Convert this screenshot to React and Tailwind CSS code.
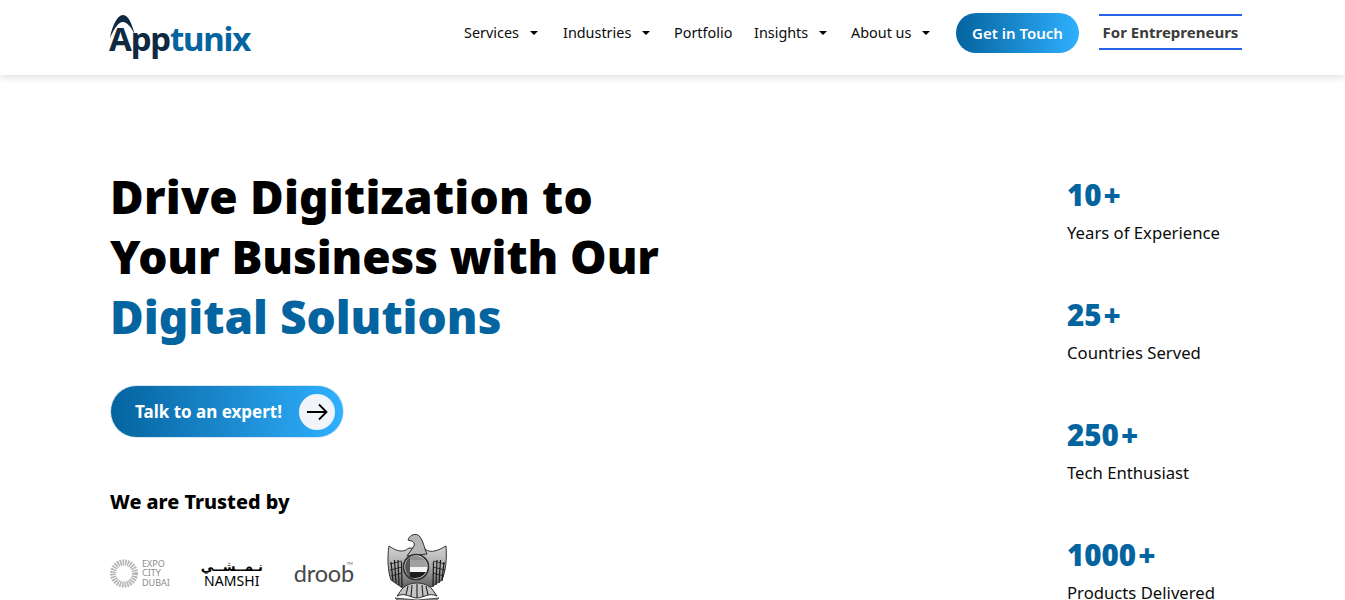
import React from 'react';

const font = { fontFamily: '"Noto Sans", "DejaVu Sans", sans-serif' };

const navItems = [
    { label: 'Services', caret: true, w: 'w-[99px]' },
    { label: 'Industries', caret: true, w: 'w-[111px]' },
    { label: 'Portfolio', caret: false, w: 'w-[80px]' },
    { label: 'Insights', caret: true, w: 'w-[97px]' },
    { label: 'About us', caret: true, w: 'w-[105px]' },
];

const stats = [
    { num: '10', label: 'Years of Experience' },
    { num: '25', label: 'Countries Served' },
    { num: '250', label: 'Tech Enthusiast' },
    { num: '1000', label: 'Products Delivered' },
];

const Logo = () => (
    <div className="relative w-[143px] h-[58px] flex items-end">
        <svg className="absolute left-[1px] top-[11px]" width="26" height="24" viewBox="0 0 26 24">
            <path d="M0 23 C2 12 7 0 13 0 C19 0 22 10 25 20 C21 12 17 7 13 7 C8 7 4 14 0 23Z" fill="#0f2a40" />
        </svg>
        <span className="text-[33px] leading-[46px] font-bold tracking-[-1.2px] text-[#0f2a40]">
            App<span className="text-[#04649f]">tunix</span>
        </span>
    </div>
);

const Header = () => (
    <header className="h-[75px] bg-white shadow-[0_2px_8px_rgba(0,0,0,0.14)] pl-[109px] pr-[103px] pb-[9px] flex items-center justify-between relative">
        <Logo />
        <div className="flex items-center">
            <nav className="flex items-center">
                {navItems.map(item => (
                    <a key={item.label} className={`${item.w} flex items-center text-[14.4px] text-[#0b0b0b]`}>
                        {item.label}
                        {item.caret && <span className="ml-[11px] w-0 h-0 border-x-[4px] border-x-transparent border-t-[4px] border-t-black"></span>}
                    </a>
                ))}
            </nav>
            <button className="w-[123px] h-[40px] rounded-[20px] bg-gradient-to-r from-[#04649f] to-[#2fb0ff] text-white text-[15px] font-semibold">
                Get in Touch
            </button>
            <a className="ml-[20px] w-[143px] h-[36px] border-y-2 border-[#2563eb] flex items-center justify-center text-[15px] font-bold text-[#3b3b3b] relative -top-[1px]">
                For Entrepreneurs
            </a>
        </div>
    </header>
);

const ExpoLogo = () => (
    <div className="flex items-center gap-[4px]">
        <svg width="28" height="29" viewBox="0 0 28 28">
            <circle cx="14" cy="14" r="11" fill="none" stroke="#b5b5b5" strokeWidth="6" strokeDasharray="1.6 0.9" />
        </svg>
        <div className="text-[9px] leading-[9.5px] text-[#8a8a8a]">
            <div>EXPO</div>
            <div>CITY</div>
            <div>DUBAI</div>
        </div>
    </div>
);

const NamshiLogo = () => (
    <div className="w-[58px] flex flex-col items-center text-black">
        <span className="text-[13px] leading-[15px] font-bold font-['DejaVu_Sans']" dir="rtl">نـمــشــي</span>
        <span className="text-[14px] leading-[14px] tracking-[0.1px]">NAMSHI</span>
    </div>
);

const Droob = () => (
    <div className="relative w-[60px] text-[#484848] font-['Lato']">
        <span className="text-[23.5px] leading-[28px] tracking-[-0.2px]">droob</span>
        <span className="absolute right-[1px] top-[2px] text-[4px] leading-[5px]">TM</span>
    </div>
);

const Emblem = () => (
    <svg width="60" height="78" viewBox="0 0 60 78" className="shrink-0">
        <defs>
            <linearGradient id="wing" x1="0" y1="0" x2="0" y2="1">
                <stop offset="0" stopColor="#d4d4d4" />
                <stop offset="0.5" stopColor="#a8a8a8" />
                <stop offset="1" stopColor="#5a5a5a" />
            </linearGradient>
        </defs>
        {/* wings */}
        <path d="M22 14 C15 20 8 16 2 12 C0 24 1 38 4 46 L17 55 L41 55 L55 46 C59 36 60 24 59 12 C52 16 44 20 38 15 Z" fill="url(#wing)" stroke="#333" strokeWidth="1" />
        {/* head */}
        <path d="M21 6 C22 2 27 -1 31 1 C34 3 36 8 38 15 L40 20 L20 22 L27 12 C28 9 26 7 24 7 Z" fill="#b5b5b5" stroke="#2e2e2e" strokeWidth="1" />
        {/* feathers */}
        <g stroke="#1a1a1a" strokeWidth="1.2" fill="none">
            <path d="M4 28 L6 47 M7.5 26 L9 49 M11 26 L12 51 M14.5 28 L15 53" />
            <path d="M57 28 L55 47 M53.5 26 L52 49 M50 26 L49 51 M46.5 28 L46 53" />
            <path d="M3 30 L15 27 M3 36 L15 33 M4 42 L15 39" strokeWidth="0.8" />
            <path d="M58 30 L46 27 M58 36 L46 33 M57 42 L46 39" strokeWidth="0.8" />
        </g>
        {/* tail */}
        <path d="M15 55 C22 47 38 47 45 55 L50 62 C42 58 36 64 30 64 C24 64 18 58 10 62 Z" fill="#c4c4c4" stroke="#2e2e2e" strokeWidth="1" />
        <g stroke="#222" strokeWidth="1.1">
            <path d="M21 52 L19 61 M25 51 L24 63 M30 50 L30 64 M35 51 L36 63 M39 52 L41 61" />
        </g>
        <path d="M8 64 L16 70 L44 70 L52 64 L30 66 Z" fill="#8c8c8c" stroke="#333" strokeWidth="0.8" />
        {/* disc with flag */}
        <circle cx="29" cy="33" r="12.5" fill="#dcdcdc" stroke="#2c2c2c" strokeWidth="1.6" />
        <path d="M23 23 L23 43 C20 41 18 37 18 33 C18 29 20 25 23 23Z" fill="#555" />
        <path d="M23 23 C26 21 33 21 38 26 L23 26 Z" fill="#8f8f8f" />
        <path d="M23 26 H38 C39.5 28 40 30 40 33 H23 Z" fill="#a0a0a0" />
        <path d="M23 33 H40 L39 38 H23 Z" fill="#f4f4f4" />
        <path d="M23 38 H39 C37 41 33 44 29 44 C27 44 25 44 23 43 Z" fill="#1d1d1d" />
    </svg>
);

const Hero = () => (
    <div className="flex flex-col">
        <h1 className="text-[46px] leading-[60px] font-black text-black">
            <span className="tracking-[0.2px]">Drive Digitization to</span><br />
            <span className="tracking-[-0.1px]">Your Business with Our</span><br />
            <span className="text-[#04649f]">Digital Solutions</span>
        </h1>
        <button className="mt-[39px] w-[234px] h-[53px] rounded-[27px] border border-[#dbe7f2] bg-gradient-to-r from-[#04649f] to-[#2fb0ff] flex items-center justify-between pl-[24px] pr-[8px]">
            <span className="text-white text-[17px] font-bold pt-[1px]">Talk to an expert!</span>
            <span className="w-[36px] h-[36px] rounded-full bg-[#f1f4f9] flex items-center justify-center">
                <svg width="22" height="18" viewBox="0 0 22 18" fill="none" stroke="#000" strokeWidth="1.8">
                    <path d="M1 9 H20.5 M13 1.5 L20.5 9 L13 16.5" />
                </svg>
            </span>
        </button>
        <h2 className="mt-[50px] text-[19.8px] leading-[28px] font-extrabold text-black">We are Trusted by</h2>
        <div className="mt-[18px] flex items-center gap-[33px]">
            <ExpoLogo />
            <NamshiLogo />
            <Droob />
            <Emblem />
        </div>
    </div>
);

const Stats = () => (
    <div className="w-[175px] flex flex-col gap-[31px] pt-[9px]">
        {stats.map(s => (
            <div key={s.num} className="h-[89px]">
                <div className="text-[29.5px] leading-[40px] font-black text-[#04649f]">
                    {s.num}<span className="ml-[2px]">+</span>
                </div>
                <div className="mt-[4px] text-[16.7px] leading-[28px] text-[#0b0b0b]">{s.label}</div>
            </div>
        ))}
    </div>
);

export default function App() {
    return (
        <div className="h-[600px] overflow-hidden bg-white" style={font}>
            <Header />
            <main className="pl-[110px] pr-[103px] pt-[91px] flex justify-between items-start">
                <Hero />
                <Stats />
            </main>
        </div>
    );
}
